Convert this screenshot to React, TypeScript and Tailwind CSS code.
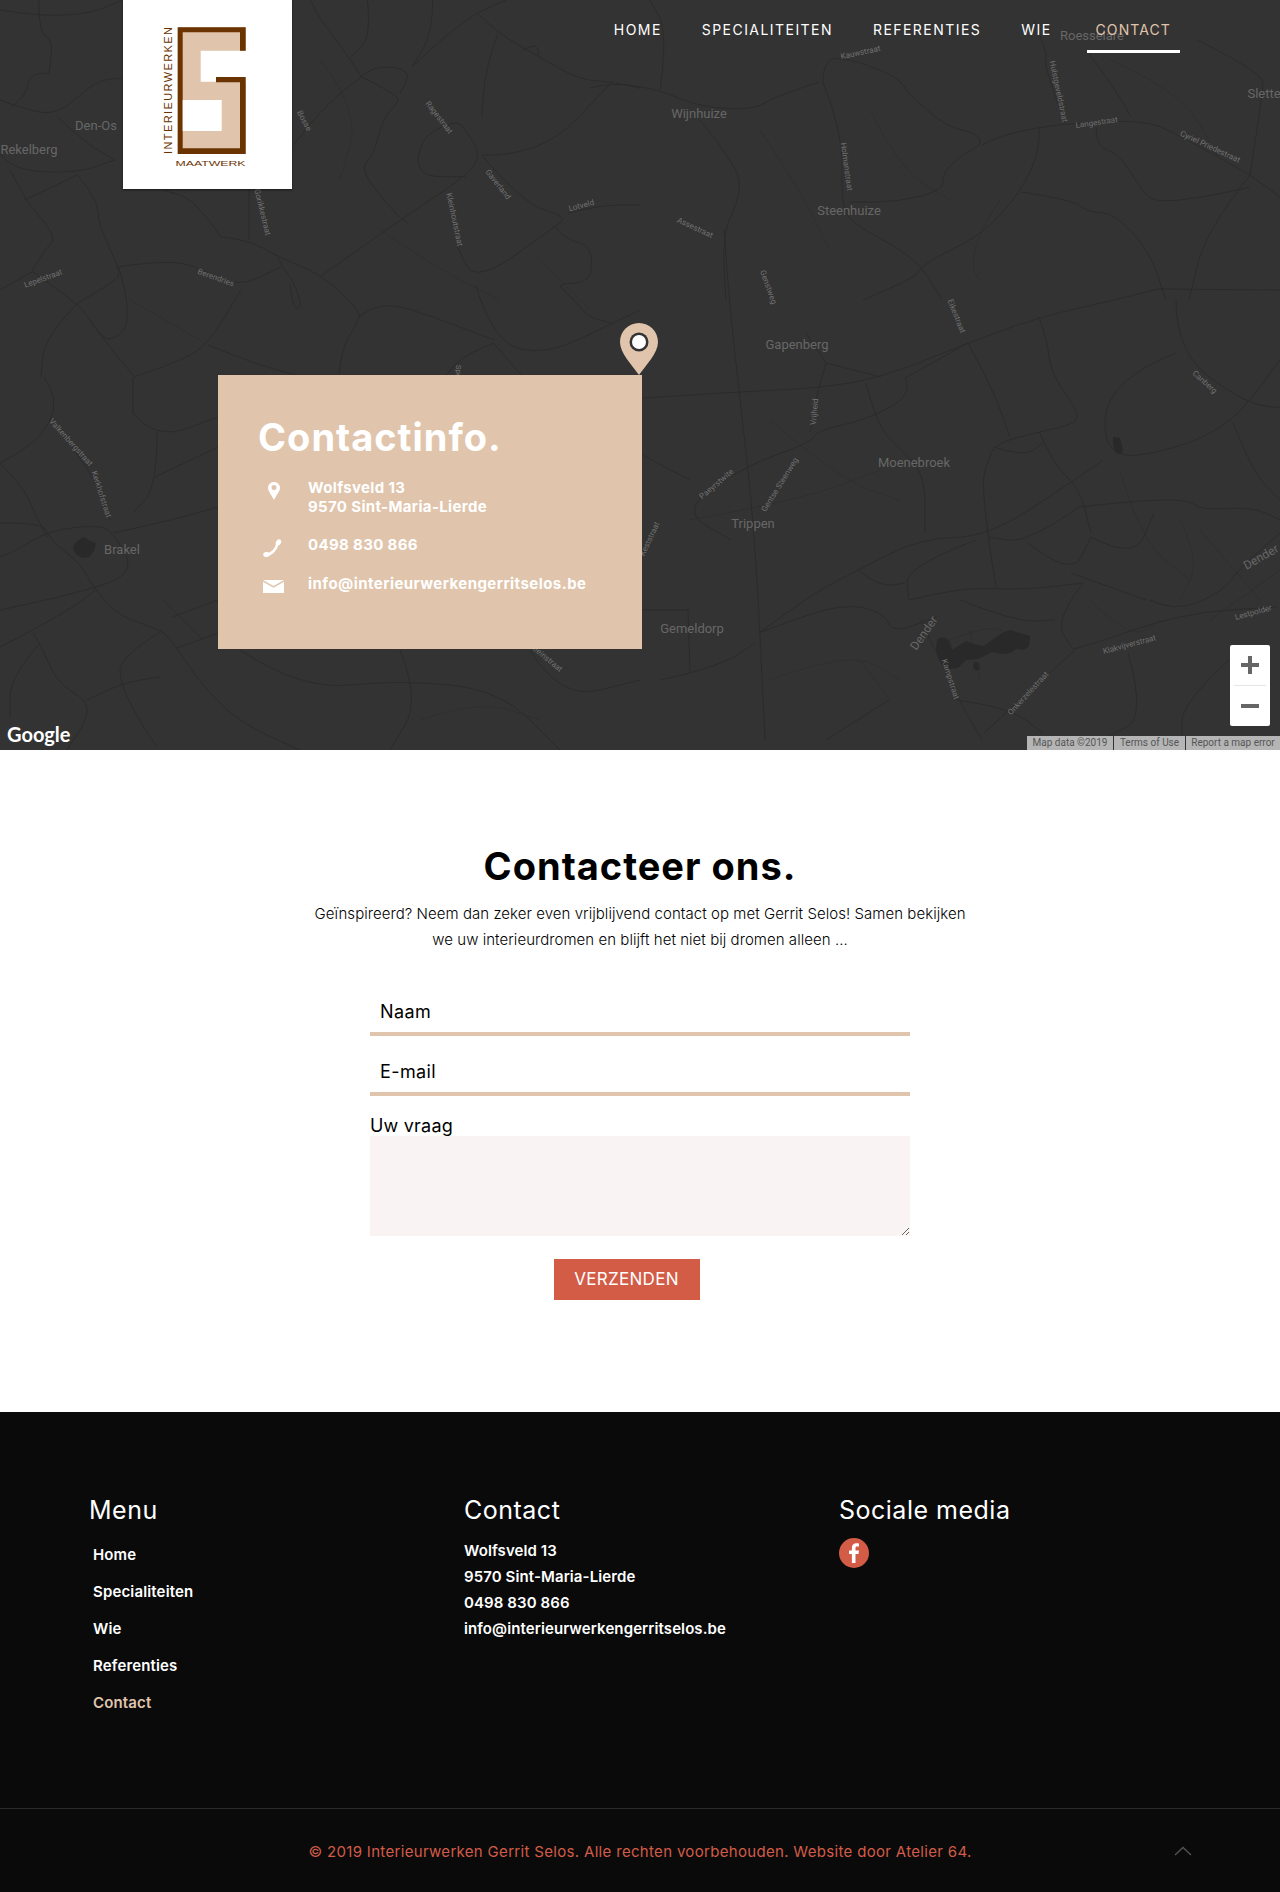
import React from 'react';

// traced from the top left of the map, x/2.45 and y/3 to get page pixels
const traced: number[][] = [
  [0, 30, 100, 50, 225, 40, 300, 0],
  [95, 0, 95, 100, 130, 120, 120, 220],
  [0, 300, 40, 320, 140, 350, 235, 240, 300, 235],
  [120, 220, 75, 215, 65, 280, 30, 320],
  [25, 510, 60, 600, 140, 710, 110, 750, 80, 810],
  [0, 460, 25, 510, 190, 520, 280, 480],
  [140, 350, 200, 420, 280, 480],
  [190, 525, 240, 600, 240, 670, 290, 800, 290, 830],
  [60, 600, 190, 525],
  [0, 870, 80, 815],
  [80, 815, 190, 910, 220, 960, 280, 1060, 330, 1130],
  [290, 800, 380, 785, 470, 790, 580, 865, 690, 800],
  [290, 800, 330, 960, 265, 1035, 220, 960],
  [190, 910, 260, 860, 290, 830],
  [190, 910, 110, 1010, 100, 1130],
  [330, 1130, 430, 1090, 510, 1035, 590, 870],
  [510, 1035, 620, 1090, 740, 1130],
  [540, 710, 610, 720, 680, 770, 790, 825, 880, 930, 880, 960, 840, 1040, 830, 1130],
  [540, 710, 480, 600, 400, 570],
  [610, 720, 610, 570],
  [680, 770, 690, 800, 720, 845, 740, 920, 720, 930, 710, 850],
  [790, 825, 980, 660, 1140, 530, 1180, 465, 1140, 390, 1120, 360, 1030, 410, 1020, 530, 1140, 530],
  [885, 230, 975, 285, 975, 310, 940, 350, 915, 465, 880, 510, 975, 650, 1000, 670],
  [885, 230, 800, 310, 720, 435],
  [885, 230, 855, 170, 780, 50, 760, 0],
  [885, 230, 915, 195, 1010, 210, 980, 280],
  [1010, 200, 1130, 60, 1240, 0],
  [1170, 40, 1220, 100, 1320, 170, 1420, 240, 1500, 245, 1568, 265],
  [1220, 100, 1190, 200, 1180, 350],
  [1180, 465, 1325, 470, 1500, 245],
  [1180, 465, 1280, 610, 1390, 650, 1360, 680, 1165, 850, 1120, 740],
  [1390, 640, 1470, 615, 1568, 615],
  [1165, 855, 1210, 1030, 1340, 1065, 1500, 970, 1568, 930],
  [1360, 680, 1385, 720, 1450, 735, 1450, 850, 1360, 850, 1400, 890, 1440, 950, 1500, 970],
  [880, 950, 930, 900, 1060, 950, 1210, 1020],
  [1210, 1030, 1140, 1060, 1090, 1130],
  [1210, 1030, 1280, 1130],
  [900, 0, 910, 110, 860, 170],
  [1060, 0, 1060, 100, 1010, 200],
  [1320, 170, 1320, 130, 1280, 150],
];

const roads: string[] = [
  // top right
  '590,88 612,82 660,90 700,107 753,110 775,97 819,82',
  '660,90 668,33 650,0',
  '700,120 735,163 742,193 722,233 726,300',
  '823,82 843,133 841,200 850,223 916,257 942,300',
  '823,82 823,57 854,60 898,77 907,92 946,127 977,133 982,145 964,153 942,173 944,190 898,202 850,202',
  '982,145 999,135 1065,123 1144,120 1175,133 1250,175',
  '1065,123 1043,63 1048,57 1034,20',
  '1039,127 1041,147 1021,192 982,235 924,263 916,277 863,300',
  '1021,192 1074,200 1087,212 1114,213 1149,250 1166,300',
  '1096,127 1096,147 1118,153 1140,187 1153,203 1206,197 1250,187',
  '1250,175 1206,230 1189,300',
  '1250,175 1280,197',
  '1087,50 1122,100 1131,117',
  '1197,40 1224,53 1263,77 1263,90 1250,175',
  '1158,289 1280,290',
  // main road and the long one going south
  '642,398 739,392 818,388 881,378 968,343 1039,317 1115,300 1158,289',
  '724,229 729,300 739,390 755,533 765,740',
  // bottom right
  '1039,317 1047,340 1051,373 1075,407 1079,423 1039,432 996,443 988,460 982,480 988,537 996,587',
  '968,343 992,387 1010,437',
  '1039,432 1055,467 1079,487 1091,533',
  '994,447 1024,457 1043,443',
  '1176,353 1107,380 1103,460 1174,450 1233,423 1280,360',
  '1103,460 1075,480 988,537 921,538 858,570 814,593 759,633',
  '1079,507 1142,500 1190,500 1201,510 1253,507 1280,520',
  '1079,507 1028,543 988,537',
  '1028,543 1071,577 1091,537',
  '1091,537 1134,560 1154,513',
  '1176,300 1176,353 1245,403 1280,408',
  '1233,423 1253,473 1280,500',
  '866,383 877,427 905,453 925,477 925,533',
  '905,378 913,395 866,420 818,430 810,443 747,465 680,510 731,540',
  '826,363 818,388 810,432',
  '826,363 881,377',
  '806,333 826,363',
  '968,343 905,378',
  '976,540 905,567 909,600',
  '858,570 879,587 905,583',
  '909,600 960,587 1024,590 1083,583',
  '1083,583 1055,620 1071,647 1075,650 1182,613 1277,607',
  '1075,650 984,733',
  '960,600 1016,622 1055,620',
  '759,633 818,610 858,605 885,615 893,633 937,617',
  '921,620 960,703 982,740',
  '660,680 719,667 755,643',
  '688,610 690,673',
  '1150,600 1174,612 1221,593 1241,567 1280,533',
  '1071,573 1146,600',
  '1229,660 1182,703 1182,740',
  '1128,653 1146,717 1107,737',
  '956,700 1008,707 1043,733',
  '889,700 826,740',
  '642,455 690,480',
  '642,610 690,610',
  // left
  '0,523 43,522 50,540 80,563 95,590 120,617 163,630 177,648 200,683 240,723 300,750',
  '0,610 95,590 135,570 113,533 100,525 50,530 13,552 0,557',
  '0,647 33,630 80,603 95,590',
  '113,533 173,520 218,507',
  '157,433 157,487 133,513',
  '133,413 155,440 218,417',
  '155,477 218,447',
  '33,633 40,643 57,683 87,700 87,720 67,750',
  '40,643 10,677 10,717',
  '163,630 120,657 120,683 140,722 157,747',
  '87,700 120,683 160,677',
  '177,648 218,633',
  '163,600 203,640',
  '172,617 218,600',
  '0,463 23,487 33,510 47,537',
  '50,420 90,467 110,520',
  '240,650 300,690 400,680 500,690 560,750',
  '400,650 420,700 390,750',
  '530,650 560,700 640,680',
  '44,377 60,400 40,440 0,463',
  '133,377 133,413',
];

const faintRoads: string[] = [
  '760,130 800,190 830,250',
  '870,110 900,170 950,200',
  '1110,60 1180,90 1220,160',
  '1000,200 960,260 1000,300',
  '770,420 840,480 900,500',
  '690,520 800,500 880,470',
  '1120,470 1140,540 1190,580',
  '1180,520 1200,560 1180,600',
  '1200,530 1260,600',
  '950,640 1000,620 1010,650',
  '970,630 980,680',
  '1090,600 1130,640 1160,620',
  '770,680 850,650 900,680',
  '860,660 890,700',
  '420,720 480,700 540,720',
  '1210,620 1280,570',
  '320,60 360,110 340,180',
  '380,230 440,270 500,300',
  '540,260 590,310',
  '130,300 200,340',
];

// rounds the corners a little, map roads are never really straight lines
function roadPath(pts: number[][]) {
  let d = `M${pts[0][0]} ${pts[0][1]}`;
  for (let i = 1; i < pts.length - 1; i++) {
    const midX = (pts[i][0] + pts[i + 1][0]) / 2;
    const midY = (pts[i][1] + pts[i + 1][1]) / 2;
    d += `Q${pts[i][0]} ${pts[i][1]} ${midX} ${midY}`;
  }
  const last = pts[pts.length - 1];
  return `${d}L${last[0]} ${last[1]}`;
}

const fromString = (s: string) => s.split(' ').map((p) => p.split(',').map(Number));

const fromTraced = (t: number[]) => {
  const pts: number[][] = [];
  for (let i = 0; i < t.length; i += 2) pts.push([t[i] / 2.45, t[i + 1] / 3]);
  return pts;
};

const townLabels = [
  { text: 'Den-Os', x: 96, y: 130 },
  { text: 'Rekelberg', x: 29, y: 154 },
  { text: 'Wijnhuize', x: 699, y: 118 },
  { text: 'Roesselare', x: 1092, y: 40 },
  { text: 'Slette', x: 1264, y: 98 },
  { text: 'Steenhuize', x: 849, y: 215 },
  { text: 'Gapenberg', x: 797, y: 349 },
  { text: 'Moenebroek', x: 914, y: 467 },
  { text: 'Trippen', x: 753, y: 528 },
  { text: 'Gemeldorp', x: 692, y: 633 },
  { text: 'Brakel', x: 122, y: 554 },
];

const streetLabels = [
  { text: 'Kauwstraat', x: 861, y: 55, r: -12 },
  { text: 'Hulstgeveldstraat', x: 1056, y: 92, r: 78 },
  { text: 'Langestraat', x: 1097, y: 125, r: -8 },
  { text: 'Cyriel Priedestraat', x: 1209, y: 149, r: 25 },
  { text: 'Holmanstraat', x: 844, y: 167, r: 82 },
  { text: 'Assestraat', x: 694, y: 230, r: 25 },
  { text: 'Genstweg', x: 766, y: 288, r: 70 },
  { text: 'Eikestraat', x: 954, y: 317, r: 68 },
  { text: 'Vrijheid', x: 817, y: 412, r: -85 },
  { text: 'Canberg', x: 1203, y: 384, r: 42 },
  { text: 'Paeyrstwite', x: 718, y: 486, r: -40 },
  { text: 'Gentse Steenweg', x: 782, y: 486, r: -58 },
  { text: 'Kampstraat', x: 948, y: 680, r: 72 },
  { text: 'Onkerzelestraat', x: 1030, y: 695, r: -47 },
  { text: 'Klakvijverstraat', x: 1130, y: 647, r: -15 },
  { text: 'Lestpolder', x: 1254, y: 615, r: -15 },
  { text: 'Valkenbergstraat', x: 69, y: 444, r: 48 },
  { text: 'Kerkhofstraat', x: 99, y: 495, r: 72 },
  { text: 'Lepelstraat', x: 44, y: 281, r: -20 },
  { text: 'Berendries', x: 215, y: 280, r: 20 },
  { text: 'Ragestraat', x: 437, y: 119, r: 52 },
  { text: 'Kleinhoutstraat', x: 452, y: 220, r: 78 },
  { text: 'Gaverland', x: 496, y: 186, r: 52 },
  { text: 'Lotveld', x: 582, y: 208, r: -15 },
  { text: 'Sint-Gorikkestraat', x: 258, y: 205, r: 76 },
  { text: 'Bosse', x: 302, y: 122, r: 62 },
  { text: 'Keststraat', x: 652, y: 540, r: -65 },
  { text: 'Spoelstraat', x: 456, y: 385, r: 90 },
  { text: 'Kleinstraat', x: 545, y: 660, r: 40 },
];

function MapBackground() {
  return (
    <svg className="absolute inset-0 h-full w-full" viewBox="0 0 1280 750" fill="none">
      <g stroke="#2f2f2f" strokeWidth="1">
        {faintRoads.map((r) => (
          <path key={r} d={roadPath(fromString(r))} />
        ))}
      </g>
      <g stroke="#2b2b2b" strokeWidth="1">
        {traced.map((t) => (
          <path key={t.join()} d={roadPath(fromTraced(t))} />
        ))}
        {roads.map((r) => (
          <path key={r} d={roadPath(fromString(r))} />
        ))}
      </g>
      {/* water */}
      <g fill="#292929">
        <path d="M937 640c4-4 10-3 13 2l2 8 14-9 8 3 10 2 8-6 10-7 8-3 6 2 14 4-1 10-5 4-8-1-6 4-8 1-10-2-14 7-12 1-8 8-10 1-8-7-4-12z" />
        <path d="M74 545c3-4 8-8 10-8l6 4 6 2-2 8-5 6-7 1-6-4-3-5z" />
        <path d="M1113 437l7 1 3 12-2 4-5-1-3-8z" />
        <path d="M974 662l5 1 1 6-4 2-3-4z" />
      </g>
      <g fontFamily="Roboto, sans-serif" fontSize="13" fill="#676767" textAnchor="middle">
        {townLabels.map((l) => (
          <text key={l.text} x={l.x} y={l.y}>
            {l.text}
          </text>
        ))}
        <text x="924" y="637" fontSize="12" transform="rotate(-55 924 633)">
          Dender
        </text>
        <text x="1261" y="561" fontSize="12" transform="rotate(-30 1261 557)">
          Dender
        </text>
      </g>
      <g fontFamily="Roboto, sans-serif" fontSize="8" fill="#717171" textAnchor="middle">
        {streetLabels.map((l) => (
          <text key={l.text} x={l.x} y={l.y} transform={`rotate(${l.r} ${l.x} ${l.y})`}>
            {l.text}
          </text>
        ))}
      </g>
      <text x="7" y="742" fontFamily="Lato, sans-serif" fontSize="20" fontWeight="700" fill="#fff">
        Google
      </text>
    </svg>
  );
}

function Logo() {
  return (
    <svg className="absolute left-[123px] top-0 h-[189px] w-[169px] shadow-[0_1px_2px_rgba(0,0,0,0.5)]" viewBox="0 0 169 189">
      <rect width="169" height="189" fill="#fff" />
      <path d="M54.7 27.3h68v23.4H77.7v31h45V154h-68z" fill="#e0c5ac" />
      <path d="M54.7 27.3h68v23.400h-5.700V32.300H59.700v116H117V82.200H93V77h29.700v77h-68z" fill="#6b3300" />
      <rect x="59.7" y="100" width="39" height="31" fill="#fff" />
      <text
        transform="translate(49 154) rotate(-90)"
        textLength="127"
        lengthAdjust="spacing"
        fontFamily="Liberation Sans, sans-serif"
        fontSize="11"
        fill="#6b3300"
      >
        INTERIEURWERKEN
      </text>
      <text
        x="52.500"
        y="166"
        textLength="70"
        lengthAdjust="spacingAndGlyphs"
        fontFamily="Liberation Sans, sans-serif"
        fontSize="8"
        fill="#6b3300"
      >
        MAATWERK
      </text>
    </svg>
  );
}

const navItems = ['Home', 'Specialiteiten', 'Referenties', 'Wie', 'Contact'];

function Nav() {
  return (
    <nav className="absolute right-[100px] top-0 flex gap-[22px]">
      {navItems.map((item) => (
        <a
          key={item}
          href="#"
          className={`border-b-[3px] px-[9px] pt-5 pb-[10px] text-[14px] leading-5 uppercase ${
            item === 'Contact'
              ? 'ml-[4px] border-white tracking-[1.1px] text-[#e0c5ac]'
              : 'border-transparent tracking-[1.45px] text-white'
          }`}
        >
          {item}
        </a>
      ))}
    </nav>
  );
}

function InfoCard() {
  return (
    <div className="absolute left-[218px] top-[375px] h-[274px] w-[424px] bg-[#e0c5ac] pt-[38px] pl-10 text-white">
      <h2 className="text-[38px] leading-[48px] font-bold tracking-[1px]">Contactinfo.</h2>
      <div className="mt-[17px] flex">
        <div className="w-[50px] pl-[10px] pt-[4px]">
          <svg width="12" height="18" viewBox="0 0 12 18">
            <path
              d="M6 0C2.700 0 0 2.600 0 5.800 0 9.500 4.200 14 6 18 7.800 14 12 9.500 12 5.800 12 2.600 9.300 0 6 0zm0 8.100a2.500 2.500 0 1 1 0-5 2.500 2.500 0 0 1 0 5z"
              fill="#fff"
            />
          </svg>
        </div>
        <p className="text-[15px] leading-[19px] font-bold tracking-[0.35px]">
          Wolfsveld 13
          <br />
          9570 Sint-Maria-Lierde
        </p>
      </div>
      <div className="mt-[19px] flex">
        <div className="w-[50px] pl-[5px] pt-[4px]">
          <svg width="20" height="19" viewBox="0 0 20 19" fill="none">
            <path d="M3 15.800C8.500 15.500 13.500 10.500 14.800 3.500" stroke="#fff" strokeWidth="2.600" />
            <ellipse cx="3.600" cy="15.500" rx="3.400" ry="2.400" transform="rotate(-8 3.600 15.500)" fill="#fff" />
            <ellipse cx="15.500" cy="3.400" rx="2.500" ry="3.200" transform="rotate(28 15.500 3.400)" fill="#fff" />
          </svg>
        </div>
        <p className="text-[15px] leading-[19px] font-bold tracking-[0.35px]">0498 830 866</p>
      </div>
      <div className="mt-4 flex">
        <div className="w-[50px] pl-[5px] pt-[6px]">
          <svg width="21" height="13" viewBox="0 0 21 13">
            <path d="M0 0h21l-10.500 6zM0 1.800l10.500 6 10.500-6V13H0z" fill="#fff" />
          </svg>
        </div>
        <p className="text-[15px] leading-[19px] font-bold tracking-[0.45px]">info@interieurwerkengerritselos.be</p>
      </div>
    </div>
  );
}

function MapHero() {
  return (
    <section className="relative h-[750px] overflow-hidden bg-[#333333]">
      <MapBackground />
      <Logo />
      <Nav />
      <svg className="absolute left-[620px] top-[323px]" width="38" height="52" viewBox="0 0 38 52">
        <path d="M19 0C8.500 0 0 8.500 0 19c0 11 12 23 19 33 7-10 19-22 19-33C38 8.500 29.500 0 19 0z" fill="#e0c5ac" />
        <circle cx="19" cy="19" r="9.500" fill="#333" />
        <circle cx="19" cy="19" r="7" fill="#fff" />
      </svg>
      <InfoCard />
      <div className="absolute left-[1230px] top-[645px] flex h-[81px] w-10 flex-col items-center rounded-[2px] bg-white px-1">
        <svg className="mt-[11px]" width="18" height="18" viewBox="0 0 18 18">
          <path d="M7 0h4v7h7v4h-7v7H7v-7H0V7h7z" fill="#666" />
        </svg>
        <div className="mt-[11px] h-px w-full bg-[#e6e6e6]" />
        <svg className="mt-[18px]" width="18" height="4" viewBox="0 0 18 4">
          <rect width="18" height="4" fill="#666" />
        </svg>
      </div>
      <div className="absolute right-0 bottom-0 flex h-[14px] gap-px font-['Roboto',sans-serif] text-[10px] leading-[14px] text-[#555]">
        <span className="w-[86px] bg-[#b5b5b5] text-center">Map data ©2019</span>
        <span className="w-[71px] bg-[#b5b5b5] text-center">Terms of Use</span>
        <span className="w-[94px] bg-[#b5b5b5] text-center">Report a map error</span>
      </div>
    </section>
  );
}

function ContactForm() {
  return (
    <section className="h-[662px] bg-white pt-[93px] text-black">
      <h1 className="text-center text-[38px] leading-[46px] font-bold tracking-[1px]">Contacteer ons.</h1>
      <p className="mx-auto mt-3 w-[670px] text-center text-[15px] leading-[26px] font-light tracking-[0.05px]">
        Geïnspireerd? Neem dan zeker even vrijblijvend contact op met Gerrit Selos! Samen bekijken we uw interieurdromen
        en blijft het niet bij dromen alleen ...
      </p>
      <form className="mx-auto mt-[43px] w-[540px]">
        <input
          type="text"
          placeholder="Naam"
          className="block h-10 w-full border-b-4 border-[#e0c5ac] px-[10px] pb-[5px] text-[18px] tracking-[0.4px] outline-none placeholder:text-black"
        />
        <input
          type="text"
          placeholder="E-mail"
          className="mt-5 block h-10 w-full border-b-4 border-[#e0c5ac] px-[10px] pb-[5px] text-[18px] tracking-[0.4px] outline-none placeholder:text-black"
        />
        <label className="mt-[19px] block text-[18px] leading-[21px] tracking-[0.2px]">Uw vraag</label>
        <textarea className="block h-[100px] w-full bg-[#f9f4f3] outline-none" />
        <div className="mt-[23px] flex justify-center">
          <button type="button" className="ml-[-27px] h-[41px] w-[146px] bg-[#d35c47] text-[17px] tracking-[0.3px] text-white uppercase">
            Verzenden
          </button>
        </div>
      </form>
    </section>
  );
}

const footerMenu = ['Home', 'Specialiteiten', 'Wie', 'Referenties', 'Contact'];

function Footer() {
  return (
    <footer className="bg-[#0a0a0b] text-white">
      <div className="grid h-[396px] grid-cols-[375px_375px_1fr] pt-[83px] pl-[89px]">
        <div>
          <h3 className="text-[25px] leading-[30px] tracking-[0.5px]">Menu</h3>
          <ul className="mt-[11px] pl-1">
            {footerMenu.map((item) => (
              <li
                key={item}
                className={`text-[15px] leading-[37px] font-semibold tracking-[0.15px] ${item === 'Contact' ? 'text-[#e0c5ac]' : ''}`}
              >
                {item}
              </li>
            ))}
          </ul>
        </div>
        <div>
          <h3 className="text-[25px] leading-[30px] tracking-[0.5px]">Contact</h3>
          <div className="mt-[13px] text-[15px] leading-[26px] font-semibold tracking-[0.1px]">
            <p>Wolfsveld 13</p>
            <p>9570 Sint-Maria-Lierde</p>
            <p>0498 830 866</p>
            <p>info@interieurwerkengerritselos.be</p>
          </div>
        </div>
        <div>
          <h3 className="text-[25px] leading-[30px] tracking-[0.5px]">Sociale media</h3>
          <a href="#" className="mt-[13px] block h-[30px] w-[30px]">
            <svg width="30" height="30" viewBox="0 0 30 30">
              <circle cx="15" cy="15" r="15" fill="#d35c47" />
              <path
                d="M16.500 25v-9h3l.5-3.500h-3.500v-2.200c0-1 .3-1.700 1.800-1.700H20V5.400C19.600 5.300 18.500 5.200 17.300 5.200c-2.600 0-4.400 1.600-4.400 4.500v2.800H10V16h2.900v9z"
                fill="#fff"
              />
            </svg>
          </a>
        </div>
      </div>
      <div className="relative flex h-[84px] items-center justify-center border-t border-[#2a2a2b] pt-[3px] text-[15px] tracking-[0.32px] text-[#d35c47]">
        <p>© 2019 Interieurwerken Gerrit Selos. Alle rechten voorbehouden. Website door Atelier 64.</p>
        <svg className="absolute left-[1174px] top-[37px]" width="18" height="10" viewBox="0 0 18 10" fill="none">
          <path d="M1 9l8-7.500L17 9" stroke="#555" strokeWidth="1.300" />
        </svg>
      </div>
    </footer>
  );
}

export default function App() {
  return (
    <div className="w-[1280px] font-['Inter',sans-serif]">
      <MapHero />
      <ContactForm />
      <Footer />
    </div>
  );
}
